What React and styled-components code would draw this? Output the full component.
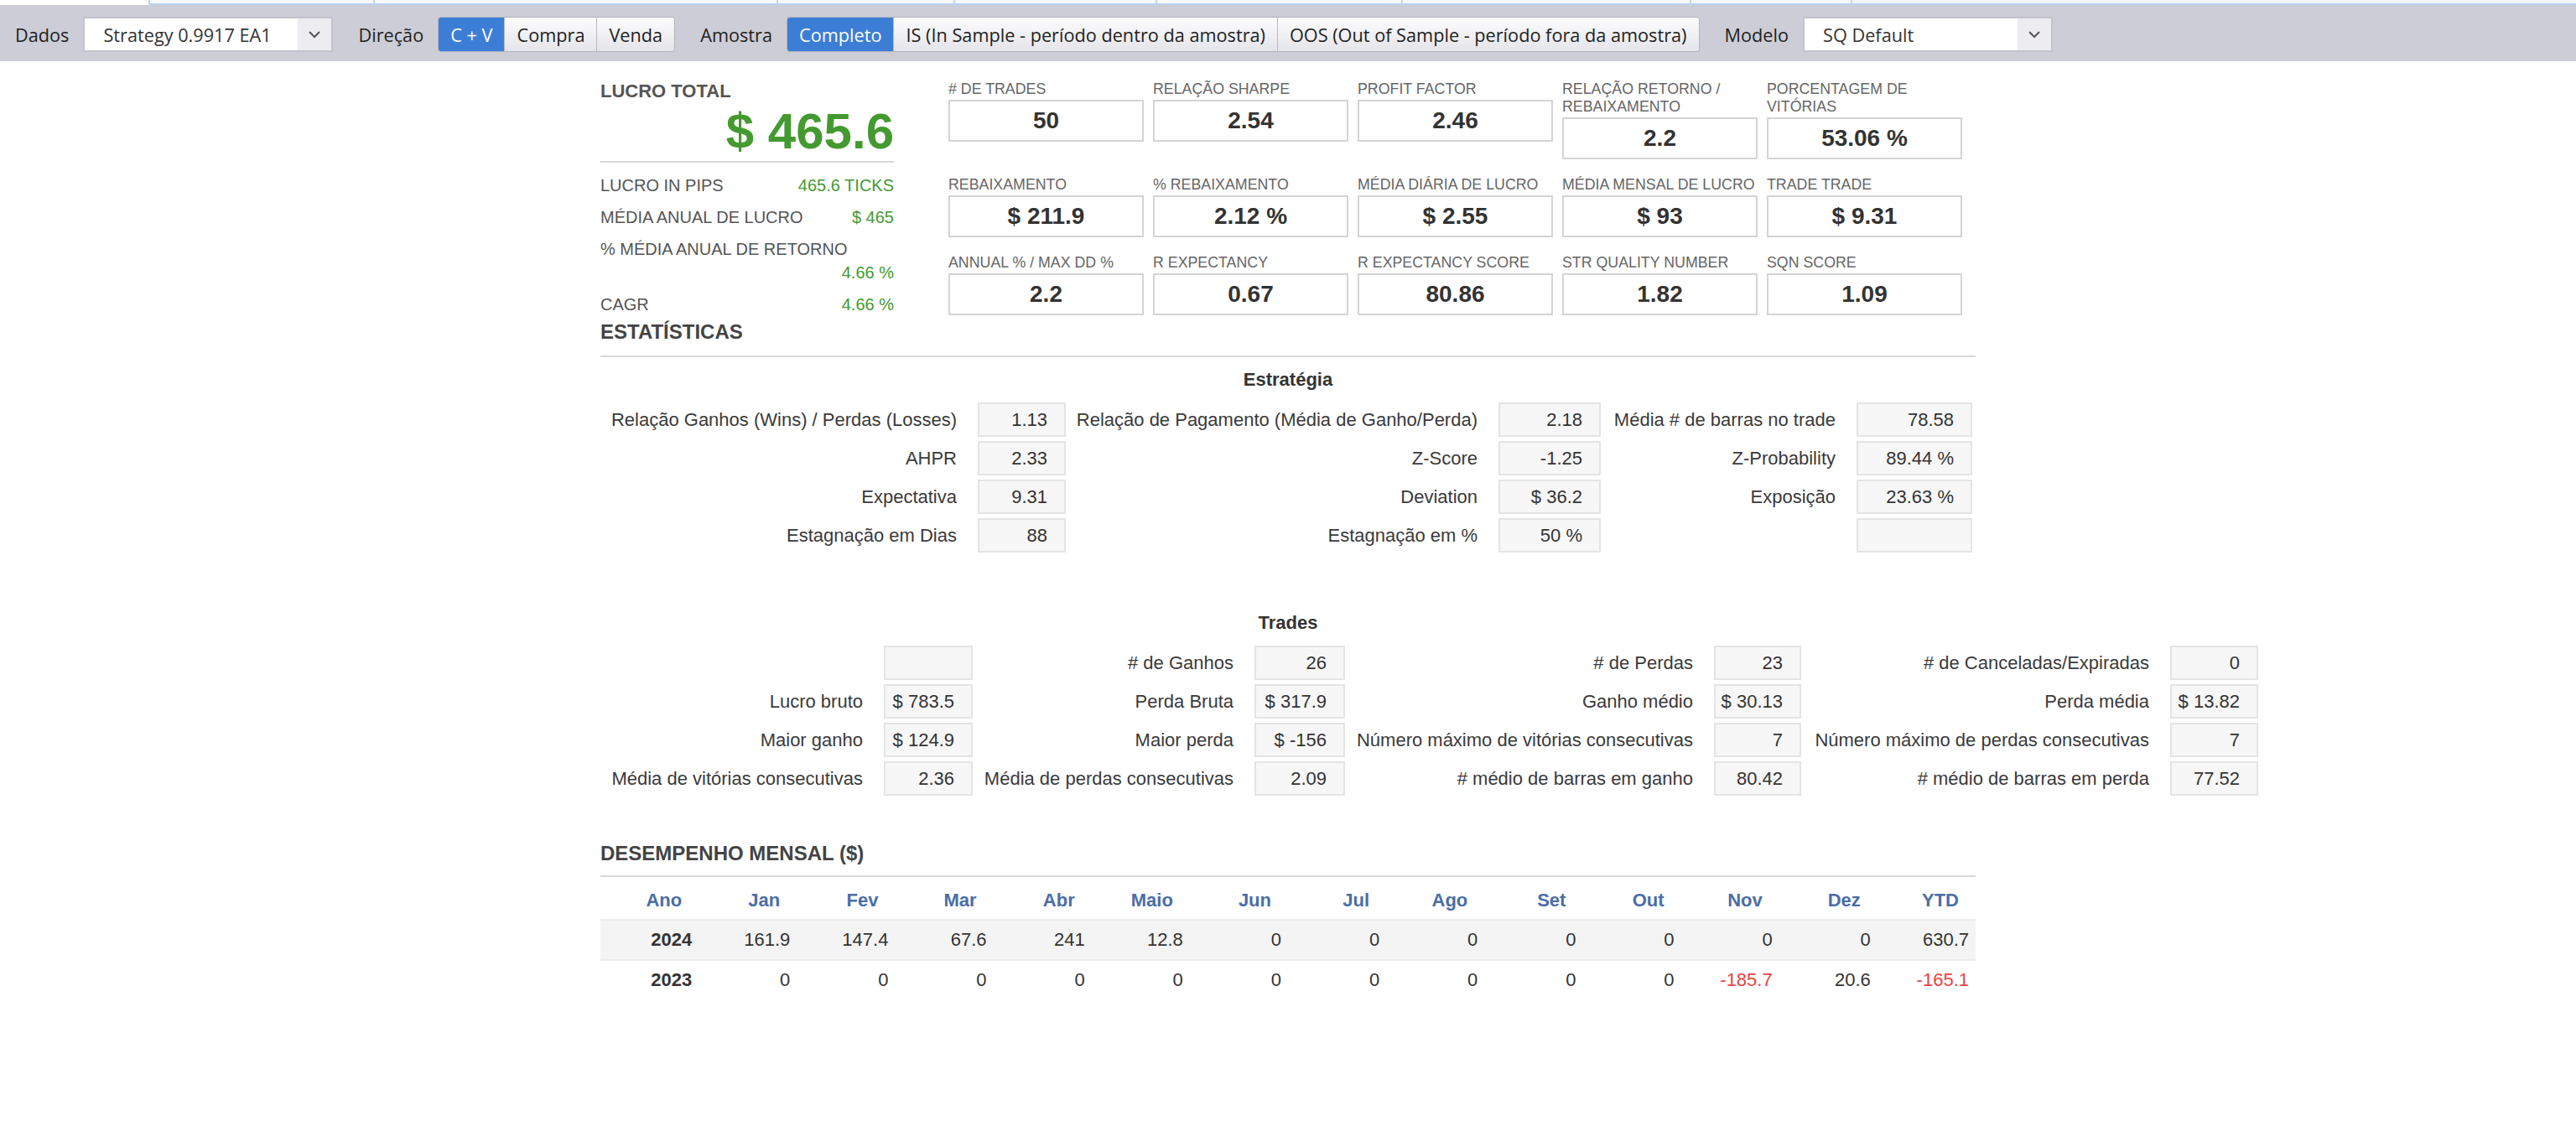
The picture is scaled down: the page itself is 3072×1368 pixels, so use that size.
import React from 'react';
import styled, { createGlobalStyle } from 'styled-components';

const GlobalStyle = createGlobalStyle`
  html, body { margin: 0; padding: 0; background: #fff; }
  body { font-family: "Liberation Sans", Arial, sans-serif; color: #333; }
`;

const TabStrip = styled.div`
  display: flex;
  height: 6px;
  box-sizing: border-box;
  background: #f2f4f7;
  border-bottom: 2px solid #b9d2ee;
`;

const Tab = styled.div`
  width: ${p => p.w}px;
  box-sizing: border-box;
  background: ${p => (p.active ? '#fff' : '#f7f9fc')};
  border-right: 2px solid #c3d7ef;
  margin-bottom: ${p => (p.active ? '-2px' : '0')};
`;

const Toolbar = styled.div`
  display: flex;
  align-items: center;
  height: 67px;
  box-sizing: border-box;
  padding: 3px 0 0 18px;
  background: #cccdd6;
  font-family: "Open Sans", "Liberation Sans", sans-serif;
  font-size: 21.7px;
  color: #222;
`;

const FieldLabel = styled.span`
  margin-right: 17px;
  white-space: nowrap;
`;

const Select = styled.div`
  display: flex;
  width: 298px;
  height: 42px;
  box-sizing: border-box;
  border: 2px solid #c2c3cb;
  background: #fff;
  margin-right: 30px;
  color: #333;
`;

const SelectText = styled.div`
  flex: 1;
  display: flex;
  align-items: center;
  padding-left: 22px;
  white-space: nowrap;
`;

const SelectArrow = styled.div`
  width: 40px;
  display: flex;
  align-items: center;
  justify-content: center;
  background: #ececf1;
`;

const ButtonGroup = styled.div`
  display: flex;
  height: 42px;
  box-sizing: border-box;
  border: 1px solid #b2b4bd;
  border-radius: 4px;
  overflow: hidden;
  margin-right: 30px;
`;

const GroupButton = styled.div`
  display: flex;
  align-items: center;
  padding: 0 14px;
  white-space: nowrap;
  border-left: ${p => (p.first ? 'none' : '1px solid #b8bac2')};
  background: ${p => (p.active ? '#3c7ed6' : 'linear-gradient(#fdfdfd, #e4e4ea)')};
  color: ${p => (p.active ? '#fff' : '#222')};
`;

const Page = styled.div`
  width: 1640px;
  margin: 0 auto;
  padding: 23px 0 80px;
`;

const TopSection = styled.div`
  display: flex;
  align-items: flex-start;
  gap: 65px;
`;

const LeftCol = styled.div`
  width: 350px;
  color: #555;
`;

const TotalTitle = styled.div`
  font-size: 22px;
  line-height: 26px;
  font-weight: bold;
  color: #555;
`;

const TotalValue = styled.div`
  margin-top: 2px;
  font-size: 60px;
  line-height: 66px;
  font-weight: bold;
  color: #449a30;
  text-align: right;
`;

const Rule = styled.div`
  height: 2px;
  background: #d9d9d9;
  margin: ${p => p.m || '0'};
`;

const InfoRow = styled.div`
  display: flex;
  flex-wrap: wrap;
  justify-content: space-between;
  font-size: 20px;
  line-height: 28px;
  padding: 5px 0;
`;

const InfoValue = styled.span`
  margin-left: auto;
  color: #449a30;
`;

const MetricGrid = styled.div`
  display: grid;
  grid-template-columns: repeat(5, 233px);
  column-gap: 11px;
  row-gap: 20px;
  align-items: start;
`;

const MetricLabel = styled.div`
  font-size: 17.8px;
  line-height: 21px;
  color: #666;
  white-space: pre;
`;

const MetricBox = styled.div`
  margin-top: 2px;
  height: 50px;
  box-sizing: border-box;
  border: 2px solid #d4d4d4;
  display: flex;
  align-items: center;
  justify-content: center;
  font-size: 28px;
  font-weight: bold;
  color: #333;
`;

const Heading = styled.div`
  margin-top: ${p => p.mt || '0'};
  font-size: 24px;
  line-height: 28px;
  font-weight: bold;
  color: #444;
`;

const SubTitle = styled.div`
  margin-top: ${p => p.mt};
  font-size: 22px;
  line-height: 26px;
  font-weight: bold;
  color: #333;
  text-align: center;
`;

const StatGrid = styled.div`
  display: grid;
  grid-template-columns: ${p => p.cols};
  grid-auto-rows: 41px;
  row-gap: 5px;
  margin-top: 14px;
  width: max-content;
`;

const StatLabel = styled.div`
  display: flex;
  align-items: center;
  justify-content: flex-end;
  padding-right: 25px;
  font-size: 22px;
  color: #3a3a3a;
  white-space: nowrap;
`;

const StatBox = styled.div`
  box-sizing: border-box;
  background: #f7f7f7;
  border: 2px solid #e4e4e4;
  display: flex;
  align-items: center;
  justify-content: flex-end;
  padding-right: 20px;
  font-size: 22px;
  color: #333;
  white-space: nowrap;
`;

const MonthRow = styled.div`
  display: grid;
  grid-template-columns: repeat(14, 1fr);
  height: ${p => (p.head ? '50px' : '48px')};
  box-sizing: border-box;
  padding-top: ${p => (p.head ? '6px' : '0')};
  background: ${p => (p.shade ? '#f4f4f4' : 'transparent')};
  border-top: ${p => (p.head ? 'none' : '2px solid #ececec')};
`;

const MonthHead = styled.div`
  display: flex;
  align-items: center;
  justify-content: flex-end;
  padding-right: 20px;
  font-size: 22px;
  font-weight: bold;
  color: #4a6ea8;
`;

const MonthCell = styled.div`
  display: flex;
  align-items: center;
  justify-content: flex-end;
  padding-right: 8px;
  font-size: 22px;
  font-weight: ${p => (p.year ? 'bold' : 'normal')};
  color: ${p => (p.neg ? '#e94343' : '#333')};
`;

const Chevron = () => (
  <svg width="16" height="10" viewBox="0 0 16 10">
    <polyline points="2,2 8,8 14,2" fill="none" stroke="#555" strokeWidth="2" />
  </svg>
);

const tabs = [179, 268, 481, 211, 241, 293, 344, 192];

const metrics = [
  ['# DE TRADES', '50'],
  ['RELAÇÃO SHARPE', '2.54'],
  ['PROFIT FACTOR', '2.46'],
  ['RELAÇÃO RETORNO /\nREBAIXAMENTO', '2.2'],
  ['PORCENTAGEM DE\nVITÓRIAS', '53.06 %'],
  ['REBAIXAMENTO', '$ 211.9'],
  ['% REBAIXAMENTO', '2.12 %'],
  ['MÉDIA DIÁRIA DE LUCRO', '$ 2.55'],
  ['MÉDIA MENSAL DE LUCRO', '$ 93'],
  ['TRADE TRADE', '$ 9.31'],
  ['ANNUAL % / MAX DD %', '2.2'],
  ['R EXPECTANCY', '0.67'],
  ['R EXPECTANCY SCORE', '80.86'],
  ['STR QUALITY NUMBER', '1.82'],
  ['SQN SCORE', '1.09'],
];

const strategy = [
  ['Relação Ganhos (Wins) / Perdas (Losses)', '1.13', 'Relação de Pagamento (Média de Ganho/Perda)', '2.18', 'Média # de barras no trade', '78.58'],
  ['AHPR', '2.33', 'Z-Score', '-1.25', 'Z-Probability', '89.44 %'],
  ['Expectativa', '9.31', 'Deviation', '$ 36.2', 'Exposição', '23.63 %'],
  ['Estagnação em Dias', '88', 'Estagnação em %', '50 %', '', ''],
];

const trades = [
  ['', '', '# de Ganhos', '26', '# de Perdas', '23', '# de Canceladas/Expiradas', '0'],
  ['Lucro bruto', '$ 783.5', 'Perda Bruta', '$ 317.9', 'Ganho médio', '$ 30.13', 'Perda média', '$ 13.82'],
  ['Maior ganho', '$ 124.9', 'Maior perda', '$ -156', 'Número máximo de vitórias consecutivas', '7', 'Número máximo de perdas consecutivas', '7'],
  ['Média de vitórias consecutivas', '2.36', 'Média de perdas consecutivas', '2.09', '# médio de barras em ganho', '80.42', '# médio de barras em perda', '77.52'],
];

const months = ['Ano', 'Jan', 'Fev', 'Mar', 'Abr', 'Maio', 'Jun', 'Jul', 'Ago', 'Set', 'Out', 'Nov', 'Dez', 'YTD'];
const years = [
  ['2024', '161.9', '147.4', '67.6', '241', '12.8', '0', '0', '0', '0', '0', '0', '0', '630.7'],
  ['2023', '0', '0', '0', '0', '0', '0', '0', '0', '0', '0', '-185.7', '20.6', '-165.1'],
];

function StatTable({ cols, rows }) {
  return (
    <StatGrid cols={cols}>
      {rows.map((row, i) =>
        row.map((cell, j) =>
          j % 2 === 0 ? (
            <StatLabel key={`${i}-${j}`}>{cell}</StatLabel>
          ) : (
            <StatBox key={`${i}-${j}`}>{cell}</StatBox>
          )
        )
      )}
    </StatGrid>
  );
}

export default function App() {
  return (
    <>
      <GlobalStyle />
      <TabStrip>
        {tabs.map((w, i) => (
          <Tab key={i} w={w} active={i === 0} />
        ))}
      </TabStrip>
      <Toolbar>
        <FieldLabel>Dados</FieldLabel>
        <Select>
          <SelectText>Strategy 0.9917 EA1</SelectText>
          <SelectArrow><Chevron /></SelectArrow>
        </Select>
        <FieldLabel>Direção</FieldLabel>
        <ButtonGroup>
          <GroupButton first active>C + V</GroupButton>
          <GroupButton>Compra</GroupButton>
          <GroupButton>Venda</GroupButton>
        </ButtonGroup>
        <FieldLabel>Amostra</FieldLabel>
        <ButtonGroup>
          <GroupButton first active>Completo</GroupButton>
          <GroupButton>IS (In Sample - período dentro da amostra)</GroupButton>
          <GroupButton>OOS (Out of Sample - período fora da amostra)</GroupButton>
        </ButtonGroup>
        <FieldLabel>Modelo</FieldLabel>
        <Select>
          <SelectText>SQ Default</SelectText>
          <SelectArrow><Chevron /></SelectArrow>
        </Select>
      </Toolbar>

      <Page>
        <TopSection>
          <LeftCol>
            <TotalTitle>LUCRO TOTAL</TotalTitle>
            <TotalValue>$ 465.6</TotalValue>
            <Rule m="2px 0 8px" />
            <InfoRow>
              <span>LUCRO IN PIPS</span>
              <InfoValue>465.6 TICKS</InfoValue>
            </InfoRow>
            <InfoRow>
              <span>MÉDIA ANUAL DE LUCRO</span>
              <InfoValue>$ 465</InfoValue>
            </InfoRow>
            <InfoRow>
              <span>% MÉDIA ANUAL DE RETORNO</span>
              <InfoValue>4.66 %</InfoValue>
            </InfoRow>
            <InfoRow style={{ paddingBottom: 3 }}>
              <span>CAGR</span>
              <InfoValue>4.66 %</InfoValue>
            </InfoRow>
          </LeftCol>
          <MetricGrid>
            {metrics.map(([label, value]) => (
              <div key={label}>
                <MetricLabel>{label}</MetricLabel>
                <MetricBox>{value}</MetricBox>
              </div>
            ))}
          </MetricGrid>
        </TopSection>

        <Heading mt="2px">ESTATÍSTICAS</Heading>
        <Rule m="14px 0 0" />

        <SubTitle mt="14px">Estratégia</SubTitle>
        <StatTable cols="450px 105px 516px 122px 305px 138px" rows={strategy} />

        <SubTitle mt="71px">Trades</SubTitle>
        <StatTable cols="338px 106px 336px 108px 440px 104px 440px 105px" rows={trades} />

        <Heading mt="55px">DESEMPENHO MENSAL ($)</Heading>
        <Rule m="12px 0 0" />
        <MonthRow head>
          {months.map(m => (
            <MonthHead key={m}>{m}</MonthHead>
          ))}
        </MonthRow>
        {years.map((row, i) => (
          <MonthRow key={row[0]} shade={i === 0}>
            {row.map((v, j) => (
              <MonthCell key={j} year={j === 0} neg={v.startsWith('-')}>{v}</MonthCell>
            ))}
          </MonthRow>
        ))}
      </Page>
    </>
  );
}
